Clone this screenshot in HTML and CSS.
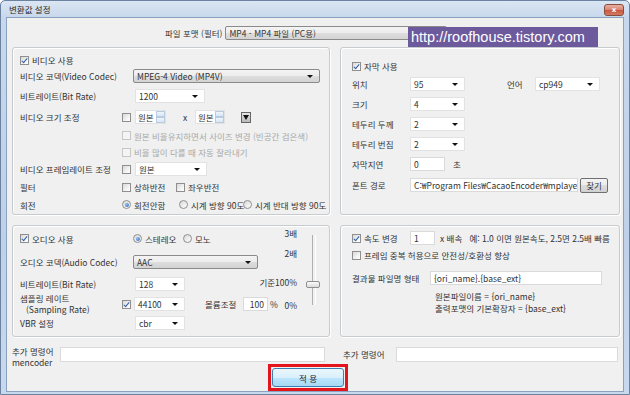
FILE: index.html
```html
<!DOCTYPE html>
<html lang="ko">
<head>
    <meta charset="UTF-8">
    <meta name="viewport" content="width=device-width, initial-scale=1.0">
    <title>변환값 설정</title>
    <link rel="stylesheet" href="styles.css">
</head>
<body>
<div class="window">
    <div class="titlebar">
        <span class="title">변환값 설정</span>
        <span class="close">x</span>
    </div>
    <div class="client">
        <div class="format-row">
            <span>파일 포맷 (필터)</span>
            <div class="drop w222">MP4 - MP4 파일 (PC용)</div>
        </div>
        <div class="watermark">http://roofhouse.tistory.com</div>

        <div class="groups">
            <!-- 비디오 -->
            <section class="group video">
                <div class="row r14"><span class="cb on"></span><span class="txt">비디오 사용</span></div>
                <div class="row r18">
                    <span class="lbl l113">비디오 코덱(Video Codec)</span>
                    <div class="drop w187">MPEG-4 Video (MP4V)</div>
                </div>
                <div class="row r22">
                    <span class="lbl l115">비트레이트(Bit Rate)</span>
                    <div class="combo w70">1200</div>
                </div>
                <div class="row r20">
                    <span class="lbl l102">비디오 크기 조정</span>
                    <span class="cb"></span>
                    <div class="spin ml4 w31">원본<span class="arrows"><i class="up"></i><i class="down"></i></span></div>
                    <span class="times">x</span>
                    <div class="spin w30">원본<span class="arrows"><i class="up"></i><i class="down"></i></span></div>
                    <span class="ddbtn"></span>
                </div>
                <div class="row r17 indent">
                    <span class="cb off"></span><span class="txt dim">원본 비율유지하면서 사이즈 변경 (빈공간 검은색)</span>
                </div>
                <div class="row r16 indent">
                    <span class="cb off"></span><span class="txt dim">비율 많이 다를 때 자동 잘라내기</span>
                </div>
                <div class="row r18">
                    <span class="lbl l102">비디오 프레임레이트 조정</span>
                    <span class="cb"></span>
                    <div class="combo ml4 w72">원본</div>
                </div>
                <div class="row r18">
                    <span class="lbl l102">필터</span>
                    <span class="opt o54"><span class="cb"></span><span class="txt">상하반전</span></span>
                    <span class="opt"><span class="cb"></span><span class="txt">좌우반전</span></span>
                </div>
                <div class="row r17">
                    <span class="lbl l102">회전</span>
                    <span class="opt o57"><span class="rb on"></span><span class="txt">회전안함</span></span>
                    <span class="opt o64"><span class="rb"></span><span class="txt">시계 방향 90도</span></span>
                    <span class="opt"><span class="rb"></span><span class="txt">시계 반대 방향 90도</span></span>
                </div>
            </section>

            <!-- 자막 -->
            <section class="group subtitle">
                <div class="row r16"><span class="cb on"></span><span class="txt">자막 사용</span></div>
                <div class="row r20">
                    <span class="lbl l58">위치</span>
                    <div class="combo w55">95</div>
                    <span class="lbl lang">언어</span>
                    <div class="combo w65">cp949</div>
                </div>
                <div class="row r20"><span class="lbl l58">크기</span><div class="combo w55">4</div></div>
                <div class="row r20"><span class="lbl l58">테두리 두께</span><div class="combo w55">2</div></div>
                <div class="row r20"><span class="lbl l58">테두리 번짐</span><div class="combo w55">2</div></div>
                <div class="row r20">
                    <span class="lbl l58">자막지연</span>
                    <div class="field w35">0</div>
                    <span class="unit">초</span>
                </div>
                <div class="row r22">
                    <span class="lbl l58">폰트 경로</span>
                    <div class="field w168">C:₩Program Files₩CacaoEncoder₩mplaye</div>
                    <button class="btn find">찾기</button>
                </div>
            </section>

            <!-- 오디오 -->
            <section class="group audio">
                <div class="audio-main">
                    <div class="row r25">
                        <span class="opt o113"><span class="cb on"></span><span class="txt">오디오 사용</span></span>
                        <span class="opt o50"><span class="rb on"></span><span class="txt">스테레오</span></span>
                        <span class="opt"><span class="rb"></span><span class="txt">모노</span></span>
                    </div>
                    <div class="row r22">
                        <span class="lbl l113">오디오 코덱(Audio Codec)</span>
                        <div class="drop w125">AAC</div>
                    </div>
                    <div class="row r21">
                        <span class="lbl l115">비트레이트(Bit Rate)</span>
                        <div class="combo w50">128</div>
                    </div>
                    <div class="row r20">
                        <span class="lbl l102 two-line">샘플링 레이트<br><span class="sub">(Sampling Rate)</span></span>
                        <span class="cb on"></span>
                        <div class="combo ml3 w51">44100</div>
                        <span class="lbl vol">볼륨조절</span>
                        <div class="field num w25">100</div>
                        <span class="unit pct">%</span>
                    </div>
                    <div class="row r18">
                        <span class="lbl l115">VBR 설정</span>
                        <div class="combo w50">cbr</div>
                    </div>
                </div>
                <div class="volume">
                    <div class="scale">
                        <span class="s3">3배</span>
                        <span class="s2">2배</span>
                        <span class="s1">기준100%</span>
                        <span class="s0">0%</span>
                    </div>
                    <div class="track"><span class="thumb"></span></div>
                </div>
            </section>

            <!-- 속도 -->
            <section class="group speed">
                <div class="row r14">
                    <span class="opt o58"><span class="cb on"></span><span class="txt">속도 변경</span></span>
                    <div class="field w25">1</div>
                    <span class="note">x 배속&nbsp;&nbsp;&nbsp;예: 1.0 이면 원본속도, 2.5면 2.5배 빠름</span>
                </div>
                <div class="row r14 mt3"><span class="cb"></span><span class="txt">프레임 중복 허용으로 안전성/호환성 향상</span></div>
                <div class="row r16 mt8">
                    <span class="lbl l78">결과물 파일명 형태</span>
                    <div class="field w172">{ori_name}.{base_ext}</div>
                </div>
                <div class="row r12 mt4 hint">원본파일이름 = {ori_name}</div>
                <div class="row r12 hint">출력포맷의 기본확장자 = {base_ext}</div>
            </section>
        </div>

        <div class="extra-row">
            <span class="lbl extra-l">추가 명령어<br>mencoder</span>
            <div class="field w265"></div>
            <span class="lbl extra-r">추가 명령어</span>
            <div class="field w222"></div>
        </div>

        <div class="apply-row">
            <span class="apply-mark"><button class="apply">적 용</button></span>
        </div>
    </div>
</div>
</body>
</html>
```

FILE: styles.css
```css
* {
    box-sizing: border-box;
}

body {
    margin: 0;
    width: 630px;
    height: 395px;
    overflow: hidden;
    font-family: "Noto Sans CJK KR", "Liberation Sans", sans-serif;
    font-size: 8.5px;
    color: #333;
    background: #fff;
}

.window {
    width: 630px;
    height: 395px;
    display: flex;
    flex-direction: column;
    padding: 0 5px 5px 5px;
    border: 1px solid #6b83a0;
    border-radius: 5px 5px 0 0;
    background: linear-gradient(#dbe6f3, #c8d8ec 16px, #bfd1e8 60%, #c9d9ed);
}

.titlebar {
    height: 16px;
    flex: none;
    display: flex;
    align-items: center;
    justify-content: space-between;
    padding-left: 3px;
}

.title {
    color: #2a2a2a;
}

.close {
    width: 20px;
    height: 12px;
    margin-top: 2px;
    border: 1px solid #8a4a3c;
    border-radius: 3px;
    background: linear-gradient(#e8b0a4, #d9826f 50%, #c8563d 50%, #d27a62);
    color: #fff;
    font-family: "DejaVu Sans", sans-serif;
    font-size: 7px;
    font-weight: bold;
    line-height: 10px;
    text-align: center;
}

.client {
    flex: 1;
    position: relative;
    border: 1px solid #8aa2c0;
    background: #f0f0f0;
}

/* top line */
.format-row {
    height: 14px;
    margin-top: 8px;
    padding-left: 158px;
    display: flex;
    align-items: center;
    gap: 3px;
}

.watermark {
    position: absolute;
    left: 401px;
    top: 9px;
    width: 190px;
    height: 20px;
    background: #6c5a9d;
    color: #fff;
    font-family: "Liberation Sans", sans-serif;
    font-size: 14.5px;
    line-height: 20px;
    padding-left: 3px;
}

/* group boxes */
.groups {
    display: grid;
    grid-template-columns: 318px 280px;
    grid-template-rows: 168px 112px;
    gap: 10px;
    margin: 7px 0 0 5px;
}

.group {
    border: 1px solid #c6cbcf;
    border-radius: 3px;
    box-shadow: inset 1px 1px 0 #fff, 1px 1px 0 #fff;
}

.video {
    padding: 5px 0 0 7px;
}

.subtitle {
    padding: 10px 0 0 11px;
}

.audio {
    display: flex;
}

.audio-main {
    width: 262px;
    padding-left: 7px;
}

.speed {
    padding: 5px 0 0 11px;
}

/* rows */
.row {
    display: flex;
    align-items: center;
    white-space: nowrap;
}

.r12 { height: 12px; }
.r14 { height: 14px; }
.r16 { height: 16px; }
.r17 { height: 17px; }
.r18 { height: 18px; }
.r20 { height: 20px; }
.r21 { height: 21px; }
.r22 { height: 22px; }
.r25 { height: 25px; }

.mt3 { margin-top: 3px; }
.mt4 { margin-top: 4px; }
.mt8 { margin-top: 8px; }
.ml3 { margin-left: 3px; }
.ml4 { margin-left: 4px; }

.indent {
    padding-left: 102px;
}

.lbl {
    flex: none;
}

.l58 { width: 58px; }
.l78 { width: 78px; }
.l102 { width: 102px; }
.l113 { width: 113px; }
.l115 { width: 115px; }

.lang {
    width: 28px;
    margin-left: 42px;
}

.vol {
    width: 38px;
    margin-left: 20px;
}

.two-line {
    line-height: 11px;
}

.two-line .sub {
    padding-left: 6px;
}

.opt {
    display: flex;
    align-items: center;
    flex: none;
}

.o50 { width: 50px; }
.o54 { width: 54px; }
.o57 { width: 57px; }
.o58 { width: 58px; }
.o64 { width: 64px; }
.o113 { width: 113px; }

.txt {
    margin-left: 3px;
}

.dim {
    color: #a8a8a8;
}

.times {
    margin-left: 17px;
    width: 12px;
}

.unit {
    margin-left: 8px;
}

.pct {
    margin-left: 2px;
}

.note {
    margin-left: 5px;
}

.hint {
    padding-left: 83px;
}

/* checkbox and radio */
.cb {
    width: 9px;
    height: 9px;
    flex: none;
    position: relative;
    border: 1px solid #8f8f8f;
    background: linear-gradient(135deg, #d8d8d8, #f7f7f7 70%, #fff);
}

.cb.off {
    border-color: #c6c6c6;
    background: #f4f4f4;
}

.cb.on::after {
    content: "";
    position: absolute;
    left: 2px;
    top: 0;
    width: 2px;
    height: 5px;
    border: solid #2f5fa8;
    border-width: 0 1.5px 1.5px 0;
    transform: rotate(40deg);
}

.rb {
    width: 9px;
    height: 9px;
    flex: none;
    position: relative;
    border: 1px solid #8f8f8f;
    border-radius: 50%;
    background: linear-gradient(135deg, #d8d8d8, #fff);
}

.rb.on::after {
    content: "";
    position: absolute;
    left: 1.5px;
    top: 1.5px;
    width: 4px;
    height: 4px;
    border-radius: 50%;
    background: radial-gradient(circle at 35% 35%, #8fc0ef, #2464b8);
}

/* inputs */
.drop,
.combo,
.field,
.spin {
    height: 14px;
    flex: none;
    position: relative;
    display: flex;
    align-items: center;
    padding-left: 3px;
    white-space: nowrap;
    overflow: hidden;
}

.drop {
    border: 1px solid #8a8a8a;
    border-radius: 2px;
    background: linear-gradient(#f4f4f4, #ececec 50%, #dedede 50%, #d3d3d3);
}

.combo {
    border: 1px solid #e2e2e2;
    background: #fff;
}

.drop::after,
.combo::after {
    content: "";
    position: absolute;
    right: 6px;
    top: 5px;
    border: 3px solid transparent;
    border-top: 3px solid #111;
    border-bottom: 0;
}

.field {
    border: 1px solid #dadada;
    background: #fff;
}

.field.num {
    justify-content: flex-end;
    padding-right: 3px;
}

.spin {
    border: 1px solid #e2e2e2;
    background: #fff;
    padding-left: 2px;
}

.spin .arrows {
    position: absolute;
    right: 0;
    top: 0;
    width: 9px;
    height: 12px;
    display: flex;
    flex-direction: column;
}

.spin .arrows i {
    flex: 1;
    position: relative;
    border: 1px solid #b9cbe0;
    background: linear-gradient(#eef5fc, #d8e6f4);
}

.spin .arrows i::after {
    content: "";
    position: absolute;
    left: 1.5px;
    top: 1px;
    border: 2px solid transparent;
}

.spin .up::after {
    border-bottom: 2px solid #4d6a8c;
    border-top: 0;
}

.spin .down::after {
    border-top: 2px solid #4d6a8c;
    border-bottom: 0;
}

.ddbtn {
    width: 10px;
    height: 11px;
    margin-left: 16px;
    flex: none;
    position: relative;
    border: 1px solid #666;
    background: linear-gradient(#e6e6e6, #b8b8b8);
}

.ddbtn::after {
    content: "";
    position: absolute;
    left: 1px;
    top: 2px;
    border: 3.5px solid transparent;
    border-top: 5px solid #111;
    border-bottom: 0;
}

.w25 { width: 25px; }
.w30 { width: 30px; }
.w31 { width: 31px; }
.w35 { width: 35px; }
.w50 { width: 50px; }
.w51 { width: 51px; }
.w55 { width: 55px; }
.w65 { width: 65px; }
.w70 { width: 70px; }
.w72 { width: 72px; }
.w125 { width: 125px; }
.w168 { width: 168px; }
.w172 { width: 172px; }
.w187 { width: 187px; }
.w222 { width: 222px; }
.w265 { width: 265px; }

/* buttons */
.btn {
    font: inherit;
    color: #333;
    padding: 0;
    border: 1px solid #707070;
    border-radius: 2px;
    background: linear-gradient(#f3f3f3, #ebebeb 50%, #dddddd 50%, #d0d0d0);
}

.find {
    width: 28px;
    height: 15px;
    margin-left: 2px;
    line-height: 12px;
}

/* volume slider */
.volume {
    display: flex;
    width: 54px;
}

.scale {
    width: 22px;
    display: flex;
    flex-direction: column;
    align-items: flex-end;
}

.scale span {
    height: 10px;
    line-height: 10px;
    white-space: nowrap;
}

.s3 { margin-top: 2px; }
.s2 { margin-top: 10px; }
.s1 { margin-top: 19px; }
.s0 { margin-top: 13px; }

.track {
    position: relative;
    width: 32px;
    height: 70px;
    margin-top: 9px;
}

.track::before {
    content: "";
    position: absolute;
    left: 15px;
    top: 0;
    bottom: 0;
    width: 2px;
    border-left: 1px solid #b0b0b0;
    border-right: 1px solid #fff;
}

.thumb {
    position: absolute;
    left: 9px;
    top: 46px;
    width: 14px;
    height: 7px;
    border: 1px solid #8f8f8f;
    border-radius: 2px;
    background: linear-gradient(#fafafa, #dcdcdc);
}

/* bottom */
.extra-row {
    display: flex;
    align-items: flex-start;
    margin: 10px 0 0 5px;
    height: 16px;
}

.extra-row .field {
    height: 15px;
}

.extra-l {
    width: 48px;
    line-height: 11px;
    margin-top: -1px;
}

.extra-r {
    width: 53px;
    margin-left: 18px;
    line-height: 15px;
}

.apply-row {
    padding-left: 261px;
    margin-top: 1px;
}

.apply-mark {
    display: inline-block;
    padding: 1px;
    border: 3px solid #e3141b;
}

.apply {
    display: block;
    width: 72px;
    height: 19px;
    padding: 0;
    font: inherit;
    color: #1f1f1f;
    border: 1px solid #3c7fb1;
    border-radius: 3px;
    background: linear-gradient(#eaf6fd, #d9f0fc 50%, #bee6fd 50%, #a7d9f5);
}
```
